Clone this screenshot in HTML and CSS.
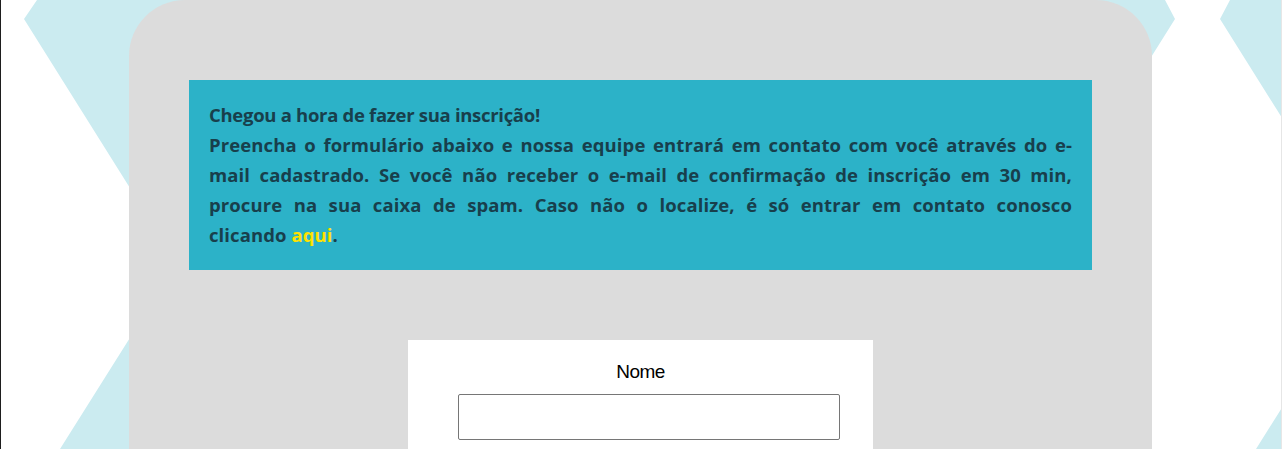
FILE: index.html
```html
<!DOCTYPE html>
<html lang="pt-BR">
<head>
<meta charset="utf-8">
<title>Inscrição</title>
<link rel="stylesheet" href="styles.css">
</head>
<body>
<div class="frame">
  <svg class="bg-shapes" width="1280" height="449" viewBox="0 0 1280 449" aria-hidden="true">
    <polygon points="36,0 1164,0 1174,19 1021,263 1138,449 59,449 176,263 23,19"/>
    <polygon points="1229,0 1400,0 1400,449 1255,449 1372,263 1219,19"/>
  </svg>
  <main class="card">
    <section class="notice">
      <p class="notice-line notice-title">Chegou a hora de fazer sua inscrição!</p>
      <p class="notice-line notice-justified">Preencha o formulário abaixo e nossa equipe entrará em contato com você através do e-mail cadastrado. Se você não receber o e-mail de confirmação de inscrição em 30 min, procure na sua caixa de spam. Caso não o localize, é só entrar em contato conosco</p>
      <p class="notice-line">clicando <a class="notice-link" href="#">aqui</a>.</p>
    </section>
    <form class="form-box">
      <label class="field-label" for="nome">Nome</label>
      <input class="field-input" id="nome" type="text">
    </form>
  </main>
</div>
</body>
</html>
```
FILE: styles.css
```css
* { box-sizing: border-box; }
html, body { margin: 0; padding: 0; background: #ffffff; }
.frame {
  position: relative;
  height: 449px;
  overflow: hidden;
  border-left: 1px solid #1e1e1e;
  border-right: 1px solid #e6e6e6;
  padding: 0 129px 0 128px;
}
.bg-shapes {
  position: absolute;
  left: 0;
  top: 0;
  z-index: 0;
}
.bg-shapes polygon { fill: #cbebf0; }
.card {
  position: relative;
  z-index: 1;
  background: #dcdcdc;
  border-radius: 56px 56px 0 0;
  padding: 80px 60px 0;
  min-height: 449px;
}
.notice {
  background: #2cb2c8;
  padding: 20px 20px;
}
.notice-line {
  margin: 0;
  font-family: "Open Sans", "Noto Sans", sans-serif;
  font-weight: 700;
  font-size: 18.5px;
  letter-spacing: 0.1px;
  line-height: 30px;
  color: #183f4c;
  text-align: left;
}
.notice-title {
  letter-spacing: -0.3px;
}
.notice-justified {
  text-align: justify;
  text-align-last: justify;
}
.notice-link {
  color: #ffe100;
  text-decoration: none;
}
.form-box {
  display: block;
  width: 465px;
  margin: 70px auto 0;
  background: #ffffff;
  padding: 21px 33px 20px 50px;
}
.field-label {
  display: block;
  font-family: "Liberation Sans", Arial, sans-serif;
  font-size: 19px;
  letter-spacing: -0.6px;
  line-height: 22px;
  color: #000000;
  text-align: center;
  margin: 0 -33px 0 -50px;
}
.field-input {
  display: block;
  width: 382px;
  height: 46px;
  margin-top: 11px;
  border: 1px solid #767676;
  border-radius: 2px;
  background: #ffffff;
}
```
